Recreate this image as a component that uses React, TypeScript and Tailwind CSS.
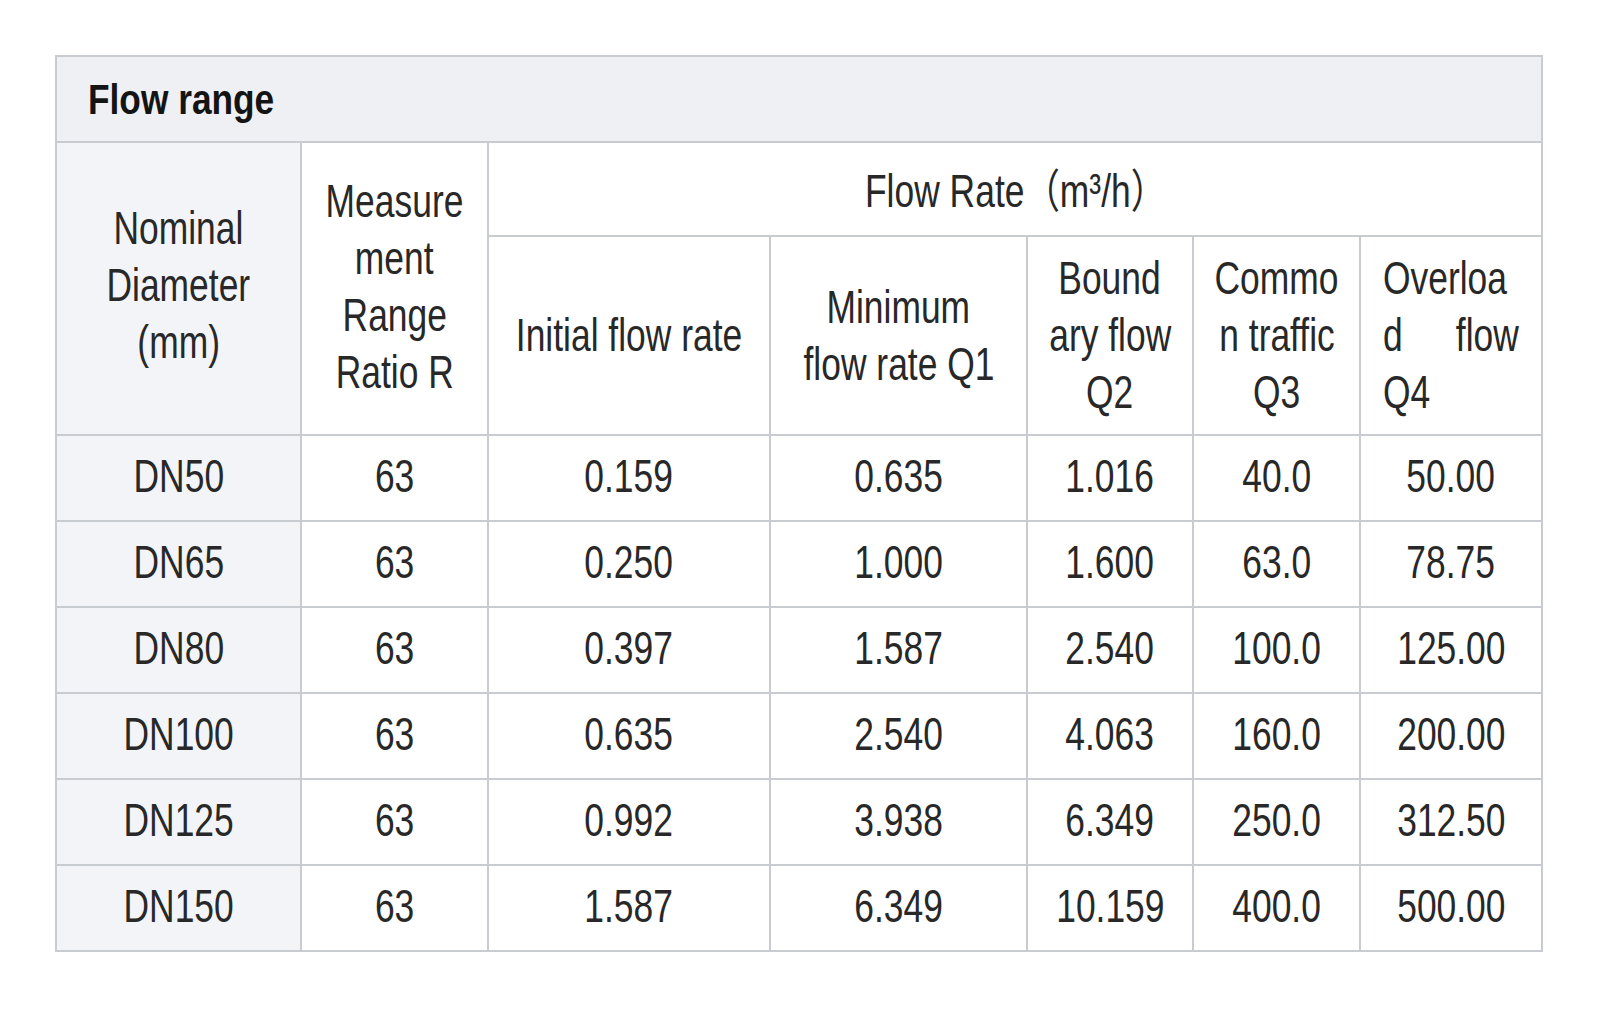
const rows = [
  ["DN50", "63", "0.159", "0.635", "1.016", "40.0", "50.00"],
  ["DN65", "63", "0.250", "1.000", "1.600", "63.0", "78.75"],
  ["DN80", "63", "0.397", "1.587", "2.540", "100.0", "125.00"],
  ["DN100", "63", "0.635", "2.540", "4.063", "160.0", "200.00"],
  ["DN125", "63", "0.992", "3.938", "6.349", "250.0", "312.50"],
  ["DN150", "63", "1.587", "6.349", "10.159", "400.0", "500.00"],
];

// text in the shot is squeezed sideways, so each line gets a narrow scale
function Lines({ lines }: { lines: string[] }) {
  return (
    <div className="flex flex-col items-center">
      {lines.map((l) => (
        <span key={l} className="block whitespace-nowrap scale-x-[0.77]">
          {l}
        </span>
      ))}
    </div>
  );
}

const cell = "border-2 border-[#c8cbd0] p-0 text-center align-middle";

export default function App() {
  return (
    <div
      className="min-h-screen bg-white pt-[55px] pl-[55px] text-[#282828] text-[46px] leading-[57px]"
      style={{ fontFamily: '"Liberation Sans", Arial, "Noto Sans CJK SC", sans-serif' }}
    >
      <table className="table-fixed border-collapse w-[1486px]">
        <colgroup>
          <col className="w-[245px]" />
          <col className="w-[187px]" />
          <col className="w-[282px]" />
          <col className="w-[257px]" />
          <col className="w-[166px]" />
          <col className="w-[167px]" />
          <col className="w-[182px]" />
        </colgroup>
        <tbody>
          {/* Title */}
          <tr>
            <td colSpan={7} className="border-2 border-[#c8cbd0] bg-[#eef0f3] h-[86px] pl-[31px] align-middle">
              <span className="block origin-left scale-x-[0.84] whitespace-nowrap font-bold text-[42px] text-[#141414]">
                Flow range
              </span>
            </td>
          </tr>

          {/* Header */}
          <tr>
            <td rowSpan={2} className={`${cell} bg-[#f3f4f7] pb-[6px]`}>
              <Lines lines={["Nominal", "Diameter", "(mm)"]} />
            </td>
            <td rowSpan={2} className={`${cell} pb-[4px]`}>
              <Lines lines={["Measure", "ment", "Range", "Ratio R"]} />
            </td>
            <td colSpan={5} className={`${cell} h-[94px] pt-[4px]`}>
              <Lines lines={["Flow Rate（m³/h）"]} />
            </td>
          </tr>
          <tr>
            <td className={`${cell} h-[199px]`}>
              <Lines lines={["Initial flow rate"]} />
            </td>
            <td className={cell}>
              <Lines lines={["Minimum", "flow rate Q1"]} />
            </td>
            <td className={cell}>
              <Lines lines={["Bound", "ary flow", "Q2"]} />
            </td>
            <td className={cell}>
              <Lines lines={["Commo", "n traffic", "Q3"]} />
            </td>
            <td className={`${cell} px-[22px] text-left`}>
              <div className="flex flex-col">
                <span className="block origin-left scale-x-[0.77] whitespace-nowrap">Overloa</span>
                <div className="flex justify-between">
                  <span className="block origin-left scale-x-[0.77]">d</span>
                  <span className="block origin-right scale-x-[0.77]">flow</span>
                </div>
                <span className="block origin-left scale-x-[0.77]">Q4</span>
              </div>
            </td>
          </tr>

          {/* Data */}
          {rows.map((r) => (
            <tr key={r[0]}>
              {r.map((v, i) => (
                <td key={i} className={`${cell} h-[86px] pb-[3px] ${i === 0 ? "bg-[#f3f4f7]" : ""}`}>
                  <Lines lines={[v]} />
                </td>
              ))}
            </tr>
          ))}
        </tbody>
      </table>
    </div>
  );
}
